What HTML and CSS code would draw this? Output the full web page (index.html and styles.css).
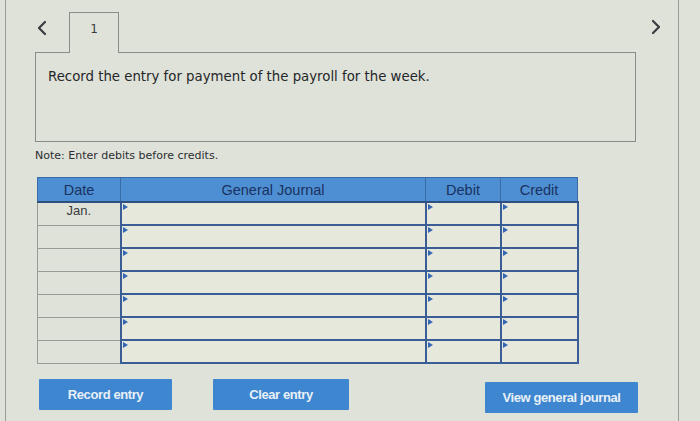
FILE: index.html
```html
<!DOCTYPE html>
<html lang="en">
<head>
    <meta charset="UTF-8">
    <title>Journal Entry</title>
    <link rel="stylesheet" href="styles.css">
</head>
<body>
    <div class="page">
        <div class="nav-row">
            <span class="nav-arrow prev">
                <svg width="12" height="16" viewBox="0 0 12 16"><path d="M9 2 L3 8 L9 14" fill="none" stroke="#3a3c40" stroke-width="2.2" stroke-linecap="round" stroke-linejoin="round"/></svg>
            </span>
            <div class="tab">1</div>
            <div class="spacer"></div>
            <span class="nav-arrow next">
                <svg width="12" height="16" viewBox="0 0 12 16"><path d="M3 2 L9 8 L3 14" fill="none" stroke="#3a3c40" stroke-width="2.2" stroke-linecap="round" stroke-linejoin="round"/></svg>
            </span>
        </div>
        <div class="question">
            <p>Record the entry for payment of the payroll for the week.</p>
        </div>
        <p class="note">Note: Enter debits before credits.</p>

        <table class="journal">
            <thead>
                <tr>
                    <th class="col-date">Date</th>
                    <th class="col-desc">General Journal</th>
                    <th class="col-debit">Debit</th>
                    <th class="col-credit">Credit</th>
                </tr>
            </thead>
            <tbody id="journal-body">
                <tr>
                    <td class="date-cell">Jan.</td>
                    <td class="input-cell"><span class="field"></span></td>
                    <td class="input-cell"><span class="field"></span></td>
                    <td class="input-cell"><span class="field"></span></td>
                </tr>
                <tr>
                    <td class="date-cell"></td>
                    <td class="input-cell"><span class="field"></span></td>
                    <td class="input-cell"><span class="field"></span></td>
                    <td class="input-cell"><span class="field"></span></td>
                </tr>
                <tr>
                    <td class="date-cell"></td>
                    <td class="input-cell"><span class="field"></span></td>
                    <td class="input-cell"><span class="field"></span></td>
                    <td class="input-cell"><span class="field"></span></td>
                </tr>
                <tr>
                    <td class="date-cell"></td>
                    <td class="input-cell"><span class="field"></span></td>
                    <td class="input-cell"><span class="field"></span></td>
                    <td class="input-cell"><span class="field"></span></td>
                </tr>
                <tr>
                    <td class="date-cell"></td>
                    <td class="input-cell"><span class="field"></span></td>
                    <td class="input-cell"><span class="field"></span></td>
                    <td class="input-cell"><span class="field"></span></td>
                </tr>
                <tr>
                    <td class="date-cell"></td>
                    <td class="input-cell"><span class="field"></span></td>
                    <td class="input-cell"><span class="field"></span></td>
                    <td class="input-cell"><span class="field"></span></td>
                </tr>
                <tr>
                    <td class="date-cell"></td>
                    <td class="input-cell"><span class="field"></span></td>
                    <td class="input-cell"><span class="field"></span></td>
                    <td class="input-cell"><span class="field"></span></td>
                </tr>
            </tbody>
        </table>

        <div class="actions">
            <button class="btn btn-record">Record entry</button>
            <button class="btn btn-clear">Clear entry</button>
            <div class="spacer"></div>
            <button class="btn btn-view">View general journal</button>
        </div>
    </div>
</body>
</html>
```

FILE: styles.css
```css
html, body {
    margin: 0;
    height: 100%;
    background-color: #dfe2d8;
}
body {
    font-family: "DejaVu Sans", Verdana, sans-serif;
    color: #2c2e30;
}
.page {
    margin-left: 5px;
    width: 643px;
    min-height: 421px;
    padding-left: 29px;
    border-left: 1px solid #9a9c98;
    border-right: 1px solid #9a9c98;
    box-sizing: content-box;
}
.nav-row {
    display: flex;
    align-items: flex-end;
    height: 52px;
}
.nav-arrow {
    display: flex;
    align-self: flex-start;
    margin-top: 20px;
}
.nav-arrow.prev {
    margin-left: 1px;
}
.nav-arrow.next {
    margin-right: 16px;
    margin-top: 19px;
}
.spacer {
    flex: 1;
}
.tab {
    position: relative;
    z-index: 1;
    margin-left: 21px;
    width: 48px;
    height: 40px;
    margin-bottom: -1px;
    border: 1px solid #8a8c88;
    border-bottom: none;
    background-color: #dfe2d8;
    font-size: 12px;
    text-align: center;
    line-height: 32px;
    color: #3a3c3e;
}
.question {
    width: 599px;
    height: 88px;
    border: 1px solid #8a8c88;
}
.question p {
    margin: 16px 0 0 12px;
    font-size: 13.3px;
    color: #24262a;
}
.note {
    margin: 7px 0 0 0;
    font-size: 11px;
    color: #2c2e32;
}
.journal {
    margin: 15px 0 0 2px;
    width: 536px;
    border-collapse: collapse;
    font-family: "Liberation Sans", Arial, sans-serif;
    table-layout: fixed;
}
.journal th {
    height: 23px;
    padding: 0;
    background-color: #4e8fd3;
    color: #1a3260;
    font-weight: normal;
    font-size: 14.5px;
    border: 1px solid #3a6aa8;
    border-bottom: 2px solid #2f4f80;
}
.col-date { width: 82px; }
.col-desc { width: 304px; }
.col-debit { width: 74px; }
.col-credit { width: 76px; }
.journal td {
    height: 21px;
    padding: 0;
}
.date-cell {
    border: 1px solid #9a9a96;
    border-right: none;
    text-align: center;
    font-size: 13px;
    color: #3a3c40;
    vertical-align: top;
    padding-top: 2px;
    line-height: 16px;
}
.input-cell {
    border: 2px solid #3b5d96;
    background-color: #e6e8dc;
    position: relative;
}
.field {
    display: block;
    height: 19px;
}
.field::before {
    content: "";
    position: absolute;
    top: 1px;
    left: 1px;
    border-top: 3px solid transparent;
    border-bottom: 3px solid transparent;
    border-left: 5px solid #3566b4;
}
.actions {
    display: flex;
    align-items: flex-start;
    margin-top: 15px;
    padding-right: 40px;
}
.btn {
    height: 31px;
    border: none;
    border-radius: 1px;
    background-color: #3e86cf;
    color: #e8f0f8;
    font-family: "Liberation Sans", Arial, sans-serif;
    font-weight: bold;
    font-size: 13px;
    letter-spacing: -0.4px;
    cursor: pointer;
}
.btn-record {
    width: 133px;
    margin-left: 4px;
}
.btn-clear {
    width: 136px;
    margin-left: 41px;
}
.btn-view {
    width: 153px;
    margin-top: 3px;
}
```
